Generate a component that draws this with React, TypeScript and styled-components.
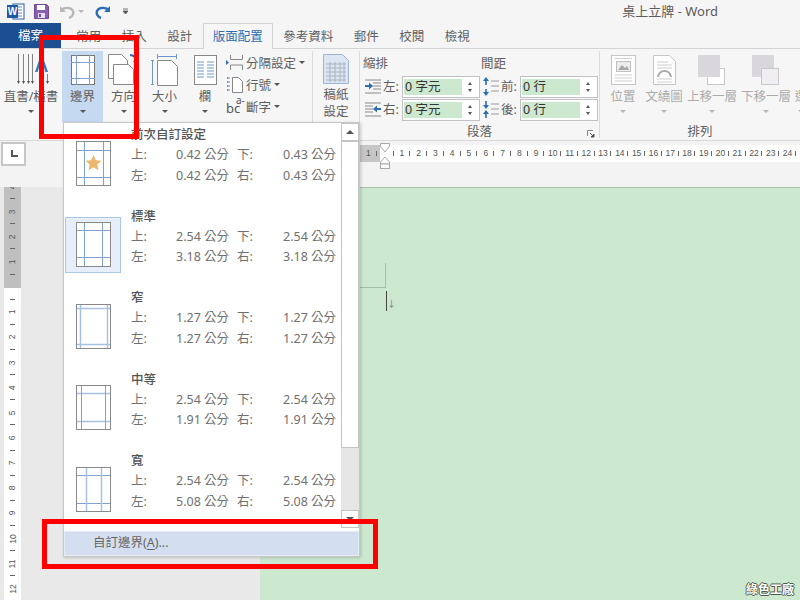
import React from "react";
import styled, { createGlobalStyle } from "styled-components";

const GlobalStyle = createGlobalStyle`
  html, body {
    margin: 0;
    padding: 0;
    background: #f5f5f5;
  }
  * {
    box-sizing: border-box;
  }
`;

const colors = {
  text: "#5e5e5e",
  dark: "#555555",
  disabled: "#ababab",
  blue: "#2b6cb5",
  line: "#7ea3d0",
  pale: "#a6c1e4",
  green: "#cce8cf",
  red: "#ff0000",
};

const Window = styled.div`
  position: relative;
  width: 800px;
  height: 600px;
  overflow: hidden;
  display: flex;
  flex-direction: column;
  background: #f5f5f5;
  color: ${colors.text};
  font-family: "Noto Sans", "Noto Sans CJK TC", sans-serif;
  font-size: 13px;
`;

const TitleBar = styled.div`
  height: 23px;
  display: flex;
  align-items: center;
  padding-left: 7px;
  flex-shrink: 0;
`;

const QuickIcon = styled.span<{ $gap: number }>`
  display: flex;
  margin-right: ${(p) => p.$gap}px;
`;

const Title = styled.div`
  margin-left: auto;
  padding-right: 82px;
  font-size: 13px;
  color: #5c5c5c;
  line-height: 23px;
`;

const TabBar = styled.div`
  height: 26px;
  display: flex;
  flex-shrink: 0;
  border-bottom: 1px solid #d4d4d4;
`;

const FileTab = styled.div`
  width: 61px;
  margin-right: 5px;
  background: #1b4f92;
  color: #ffffff;
  font-size: 12.5px;
  line-height: 26px;
  text-align: center;
`;

const Tab = styled.div<{ $active?: boolean }>`
  padding: 0 9.25px;
  height: ${(p) => (p.$active ? 26 : 25)}px;
  line-height: 25px;
  font-size: 12.5px;
  color: ${(p) => (p.$active ? colors.blue : colors.text)};
  background: ${(p) => (p.$active ? "#f6f6f6" : "transparent")};
  border: 1px solid ${(p) => (p.$active ? "#d4d4d4" : "transparent")};
  border-bottom: none;
`;

const Ribbon = styled.div`
  height: 92px;
  display: flex;
  flex-shrink: 0;
  background: #f6f6f6;
  border-bottom: 1px solid #d8d8d8;
`;

const Group = styled.div<{ $width: number; $divider?: boolean }>`
  width: ${(p) => p.$width}px;
  height: 87px;
  margin-top: 2px;
  flex-shrink: 0;
  display: flex;
  flex-direction: column;
  border-right: ${(p) => (p.$divider ? "1px solid #dadada" : "none")};
`;

const GroupBody = styled.div`
  height: 71px;
  flex-shrink: 0;
  display: flex;
`;

const GroupLabel = styled.div`
  flex-shrink: 0;
  font-size: 12.5px;
  text-align: center;
  line-height: 18px;
  padding-top: 1px;
  position: relative;
`;

const Launcher = styled.span`
  position: absolute;
  right: 4px;
  top: 8px;
  display: flex;
`;

const BigButton = styled.div<{ $width: number; $active?: boolean; $disabled?: boolean }>`
  width: ${(p) => p.$width}px;
  flex-shrink: 0;
  height: 71px;
  padding-top: 2px;
  display: flex;
  flex-direction: column;
  align-items: center;
  white-space: nowrap;
  color: ${(p) => (p.$disabled ? colors.disabled : colors.text)};
  background: ${(p) => (p.$active ? "#c5d9f1" : "transparent")};
`;

const BigIcon = styled.div`
  height: 33px;
  margin-bottom: 1px;
  display: flex;
  align-items: center;
  justify-content: center;
`;

const BigLabel = styled.div`
  font-size: 12.5px;
  line-height: 20px;
`;

const BigLabelSecond = styled(BigLabel)`
  margin-top: -3px;
`;

const Caret = styled.span<{ $muted?: boolean; $gap?: number }>`
  display: inline-block;
  margin-top: ${(p) => p.$gap ?? 0}px;
  width: 0;
  height: 0;
  border-left: 3px solid transparent;
  border-right: 3px solid transparent;
  border-top: 3px solid ${(p) => (p.$muted ? "#b5b5b5" : "#555555")};
`;

const SmallColumn = styled.div`
  display: flex;
  flex-direction: column;
  padding-left: 1px;
`;

const SmallRow = styled.div`
  height: 22px;
  display: flex;
  align-items: center;
  gap: 3px;
  font-size: 12.5px;
  white-space: nowrap;
`;

const ParaColumn = styled.div<{ $width: number; $pad: number }>`
  width: ${(p) => p.$width}px;
  padding-left: ${(p) => p.$pad}px;
`;

const ParaHeading = styled.div`
  font-size: 12.5px;
  line-height: 20px;
  height: 25px;
  padding-top: 3px;
`;

const SpinRow = styled.div`
  height: 23px;
  display: flex;
  align-items: flex-start;
  font-size: 12.5px;
`;

const SpinLabel = styled.span`
  width: 19px;
  line-height: 21px;
  white-space: nowrap;
`;

const SpinIcon = styled.span`
  width: 20px;
  height: 21px;
  display: flex;
  align-items: center;
  justify-content: center;
`;

const Spinner = styled.div`
  width: 78px;
  height: 22px;
  background: #ffffff;
  border: 1px solid #c2c2c2;
  padding: 2px 1px;
  display: flex;
  align-items: stretch;
`;

const SpinValue = styled.div`
  width: 58px;
  background: ${colors.green};
  color: #333333;
  font-size: 12.5px;
  line-height: 16px;
  padding-left: 1px;
`;

const SpinArrows = styled.div`
  flex: 1;
  display: flex;
  flex-direction: column;
  align-items: center;
  justify-content: center;
  gap: 4px;
`;

const ArrowTiny = styled.span<{ $up?: boolean }>`
  width: 0;
  height: 0;
  border-left: 2.5px solid transparent;
  border-right: 2.5px solid transparent;
  border-${(p) => (p.$up ? "bottom" : "top")}: 3px solid #555555;
`;

const RulerRow = styled.div`
  height: 46px;
  flex-shrink: 0;
  display: flex;
  background: #f3f3f3;
  padding-top: 4px;
`;

const CornerBox = styled.div`
  width: 25px;
  height: 24px;
  margin: -3px 0 0 1px;
  background: #ffffff;
  border: 2px solid #c6c6c6;
  display: flex;
  align-items: center;
  justify-content: center;
`;

const HRuler = styled.div`
  position: relative;
  margin-left: 334px;
  height: 17px;
  display: flex;
  background: linear-gradient(90deg, #c6c6c6 20px, #ffffff 20px);
  flex-grow: 1;
`;

const HCell = styled.span`
  flex: 0 0 16.78px;
  position: relative;
  text-align: center;
  font-family: "Liberation Sans", sans-serif;
  font-size: 8.5px;
  line-height: 17px;
  color: #555555;

  &::after {
    content: "";
    position: absolute;
    right: 0;
    top: 6px;
    width: 1px;
    height: 5px;
    background: #666666;
  }
`;

const IndentMarker = styled.span`
  position: absolute;
  left: 20px;
  top: -2px;
  display: flex;
`;

const Workspace = styled.div`
  flex: 1;
  min-height: 0;
  display: flex;
  background: #e9e9e9;
`;

const VRuler = styled.div`
  width: 17px;
  margin-left: 4px;
  flex-shrink: 0;
  overflow: hidden;
  background: linear-gradient(180deg, #bfbfbf 101px, #ffffff 101px);
`;

const VCells = styled.div`
  margin-top: -13px;
  display: flex;
  flex-direction: column;
`;

const VCell = styled.span`
  flex: 0 0 25.15px;
  position: relative;
  display: flex;
  align-items: center;
  justify-content: center;
  font-family: "Liberation Sans", sans-serif;
  font-size: 8.5px;
  color: #555555;

  > b {
    font-weight: 400;
    transform: rotate(-90deg);
  }

  &::after {
    content: "";
    position: absolute;
    bottom: 0;
    left: 6px;
    width: 5px;
    height: 1px;
    background: #666666;
  }
`;

const Page = styled.div`
  margin-left: 239px;
  flex: 1;
  background: ${colors.green};
  border-top: 1px solid #a9bfac;
  padding-top: 75px;
`;

const MarginCorner = styled.div`
  width: 126px;
  height: 25px;
  border-right: 1px solid #a3bfa7;
  border-bottom: 1px solid #a3bfa7;
`;

const Cursor = styled.div`
  margin: 3px 0 0 126px;
  width: 2px;
  height: 20px;
  border-left: 1px solid #444444;
  position: relative;

  &::after {
    content: "↓";
    position: absolute;
    left: 0;
    top: 8px;
    font-size: 9px;
    line-height: 10px;
    color: #777777;
  }
`;

const Menu = styled.div`
  position: absolute;
  left: 63px;
  top: 122px;
  width: 297px;
  height: 435px;
  background: #ffffff;
  border: 1px solid #c8c8c8;
  box-shadow: 1px 1px 3px rgba(0, 0, 0, 0.18);
  z-index: 2;
`;

const MenuBody = styled.div`
  height: 405px;
  display: flex;
`;

const MenuList = styled.div`
  width: 277px;
  padding-top: 1px;
  overflow: hidden;
`;

const MarginItem = styled.div`
  height: 81.5px;
  display: flex;
  gap: 10px;
  padding-left: 1px;
`;

const ThumbCell = styled.div<{ $selected?: boolean }>`
  width: 56px;
  height: 56px;
  margin-top: 11px;
  flex-shrink: 0;
  display: flex;
  align-items: center;
  justify-content: center;
  background: ${(p) => (p.$selected ? "#e6eefa" : "transparent")};
  border: 1px solid ${(p) => (p.$selected ? "#aac8ea" : "transparent")};
`;

const MarginInfo = styled.div`
  flex: 1;
  padding-top: 1px;
`;

const MarginTitle = styled.div`
  font-size: 12.5px;
  font-weight: 500;
  line-height: 20px;
  color: ${colors.dark};
`;

const ValueRow = styled.div`
  display: grid;
  grid-template-columns: 45px 61px 46px 54px;
  font-size: 12.5px;
  line-height: 20.5px;
  color: #707070;
  white-space: nowrap;
`;

const Scrollbar = styled.div`
  width: 18px;
  display: flex;
  flex-direction: column;
  background: #e6e6e6;
`;

const ScrollButton = styled.div<{ $grow?: boolean }>`
  height: ${(p) => (p.$grow ? 307 : 18)}px;
  background: #ffffff;
  border: 1px solid #c4c4c4;
  display: flex;
  align-items: center;
  justify-content: center;
`;

const ScrollTrack = styled.div`
  flex: 1;
`;

const ScrollArrow = styled.span<{ $up?: boolean }>`
  width: 0;
  height: 0;
  border-left: 4px solid transparent;
  border-right: 4px solid transparent;
  border-${(p) => (p.$up ? "bottom" : "top")}: 4px solid #555555;
`;

const MenuFooter = styled.div`
  height: 25px;
  margin: 3px 0 0 0;
  padding-left: 28px;
  background: #d3dff0;
  border: 1px solid #e4ebf5;
  font-size: 12.5px;
  line-height: 22px;
  color: #666666;

  u {
    text-underline-offset: 2px;
  }
`;

const Highlight = styled.div<{ $x: number; $y: number; $w: number; $h: number }>`
  position: absolute;
  left: ${(p) => p.$x}px;
  top: ${(p) => p.$y}px;
  width: ${(p) => p.$w}px;
  height: ${(p) => p.$h}px;
  border: 5px solid ${colors.red};
  z-index: 3;
`;

const Watermark = styled.div`
  position: absolute;
  right: 6px;
  bottom: 3px;
  font-size: 12px;
  line-height: 14px;
  font-weight: 700;
  color: #ffffff;
  text-shadow: 1px 0 #4d5a50, -1px 0 #4d5a50, 0 1px #4d5a50, 0 -1px #4d5a50;
`;

const HyphenGlyph = styled.span`
  position: relative;
  width: 17px;
  height: 20px;
  padding-top: 7px;
  font-size: 13px;
  line-height: 10px;
  color: #555555;
`;

const HyphenA = styled.span`
  position: absolute;
  left: 10px;
  top: 1px;
  font-size: 10px;
  line-height: 6px;
`;

const WordIcon = () => (
  <svg width="18" height="17" viewBox="0 0 18 17">
    <rect x="6" y="1" width="11" height="15" fill="#ffffff" stroke="#2a5ea8" />
    <path d="M10 4h5M10 7h5M10 10h5M10 13h5" stroke="#5f8ac6" />
    <rect x="0" y="2" width="11" height="13" fill="#1f5aa6" />
    <text x="5.5" y="12" fontSize="10" fontWeight="700" textAnchor="middle" fill="#ffffff" fontFamily="Liberation Sans">
      W
    </text>
  </svg>
);

const SaveIcon = () => (
  <svg width="15" height="15" viewBox="0 0 15 15">
    <path d="M.5.5h12l2 2v12H.5z" fill="#8a5fb0" stroke="#6f4797" />
    <rect x="3" y="1" width="8" height="5" fill="#ffffff" />
    <rect x="4" y="9" width="7" height="5" fill="#e6dcef" />
    <rect x="5" y="10" width="2" height="3" fill="#6f4797" />
  </svg>
);

const UndoIcon = () => (
  <svg width="16" height="14" viewBox="0 0 16 14" fill="none">
    <path d="M2 5c4-3 10-3 12 1 1 3-1 6-4 7" stroke="#b8b8b8" strokeWidth="2.4" />
    <path d="M1 1v6h6z" fill="#b8b8b8" />
  </svg>
);

const RedoIcon = () => (
  <svg width="16" height="14" viewBox="0 0 16 14" fill="none">
    <path d="M14 5C10 2 4 2 2 6c-1 3 1 6 4 7" stroke="#2b6cb5" strokeWidth="2.4" />
    <path d="M15 1v6H9z" fill="#2b6cb5" />
  </svg>
);

const MoreIcon = () => (
  <svg width="7" height="7" viewBox="0 0 7 7">
    <path d="M1 1h5M1 3h5L3.5 6z" fill="#555555" stroke="#555555" strokeWidth=".8" />
  </svg>
);

const DirectionIcon = () => (
  <svg width="36" height="32" viewBox="0 0 36 32" fill="none">
    <path d="M5.5 0v28M10.5 0v28M15.5 0v28M19.5 0v28M34.5 20v8" stroke="#808080" />
    <path d="M4 27l1.5 3 1.5-3zM9 27l1.5 3 1.5-3zM14 27l1.5 3 1.5-3zM18 27l1.5 3 1.5-3zM33 27l1.5 3 1.5-3z" fill="#555555" />
    <path d="M22 18L27.5 2h2L35 18h-2.6l-1.4-4.500h-5L24.600 18zM26.800 11.500h3.400L28.500 6z" fill="#3a76bd" />
  </svg>
);

const MarginsIcon = () => (
  <svg width="24" height="30" viewBox="0 0 24 30" fill="none">
    <rect x=".5" y=".5" width="23" height="29" fill="#ffffff" stroke="#777777" />
    <path d="M5.500 0v30M18.500 0v30M0 7.500h24M0 23.500h24" stroke={colors.line} />
  </svg>
);

const OrientationIcon = () => (
  <svg width="32" height="32" viewBox="0 0 32 32" fill="none">
    <path d="M.5.5h13l6 6v18H.5z" fill="#ffffff" stroke="#888888" />
    <path d="M5.500 10.500h15l5 5v15h-20z" fill="#ffffff" stroke="#888888" />
    <path d="M22 1c4 0 6 3 6 7" stroke="#2b6cb5" strokeWidth="2" />
    <path d="M25 7l3 4 3-4z" fill="#2b6cb5" />
  </svg>
);

const SizeIcon = () => (
  <svg width="27" height="32" viewBox="0 0 27 32" fill="none">
    <path d="M6.500 6.500h14l6 6v19h-20z" fill="#ffffff" stroke="#888888" />
    <path d="M6 2.500h20M6.500 0v5M25.500 0v5" stroke="#6d97c9" />
    <path d="M1.500 6v25M0 6.500h3M0 30.500h3" stroke="#6d97c9" />
  </svg>
);

const ColumnsIcon = () => (
  <svg width="23" height="30" viewBox="0 0 23 30" fill="none">
    <rect x=".5" y=".5" width="22" height="29" fill="#ffffff" stroke="#888888" />
    <path d="M3 7h7M13 7h7M3 10h7M13 10h7M3 13h7M13 13h7M3 16h7M13 16h7M3 19h7M13 19h7M3 22h7M13 22h7" stroke="#6d97c9" />
  </svg>
);

const BreaksIcon = () => (
  <svg width="17" height="17" viewBox="0 0 17 17" fill="none">
    <path d="M4.500 1v4.500h12V1M4.500 16v-5h12v5" stroke="#888888" />
    <path d="M0 6l3 2.500L0 11z" fill="#2b6cb5" />
  </svg>
);

const LineNumberIcon = () => (
  <svg width="17" height="17" viewBox="0 0 17 17" fill="none">
    <path d="M6.500 1.500h6l4 4v11h-10z" fill="#ffffff" stroke="#888888" />
    <path d="M1 2h3M1 6h3M1 10h3M1 14h3" stroke="#2b6cb5" strokeWidth="1.6" strokeDasharray="1.5 1" />
  </svg>
);

const ManuscriptIcon = () => (
  <svg width="26" height="30" viewBox="0 0 26 30" fill="none">
    <path d="M.5.5h19l6 6v23H.5z" fill="#dce6f3" stroke="#9db4d2" />
    <path d="M3 10h20M3 14h20M3 18h20M3 22h20M3 26h20M7 8v20M12 8v20M17 8v20M21 8v20" stroke="#aab3bf" />
  </svg>
);

const IndentLeftIcon = () => (
  <svg width="16" height="15" viewBox="0 0 16 15" fill="none">
    <path d="M0 1h16M8 4h8M8 7h8M8 10h8M0 14h16" stroke="#8a8a8a" />
    <path d="M0 7h5" stroke="#2b6cb5" strokeWidth="2" />
    <path d="M4 3.500L8 7l-4 3.500z" fill="#2b6cb5" />
  </svg>
);

const IndentRightIcon = () => (
  <svg width="16" height="15" viewBox="0 0 16 15" fill="none">
    <path d="M0 1h16M0 4h8M0 7h8M0 10h8M0 14h16" stroke="#8a8a8a" />
    <path d="M11 7h5" stroke="#2b6cb5" strokeWidth="2" />
    <path d="M12 3.500L8 7l4 3.500z" fill="#2b6cb5" />
  </svg>
);

const SpaceBeforeIcon = () => (
  <svg width="17" height="19" viewBox="0 0 17 19" fill="none">
    <path d="M3 3v5M3 12v5" stroke="#2b6cb5" strokeWidth="1.6" />
    <path d="M0 4l3-4 3 4zM0 15l3 4 3-4z" fill="#2b6cb5" />
    <path d="M8 4h8M8 9h8M8 14h8" stroke="#9a9a9a" />
  </svg>
);

const SpaceAfterIcon = () => (
  <svg width="17" height="19" viewBox="0 0 17 19" fill="none">
    <path d="M3 1v5M3 13v5" stroke="#2b6cb5" strokeWidth="1.6" />
    <path d="M0 5l3 4 3-4zM0 14l3-4 3 4z" fill="#2b6cb5" />
    <path d="M8 4h8M8 9h8M8 14h8" stroke="#9a9a9a" />
  </svg>
);

const LauncherIcon = () => (
  <svg width="8" height="8" viewBox="0 0 8 8" fill="none">
    <path d="M.5 6V.5H6" stroke="#888888" />
    <path d="M3 3l3 3M7 4v3H4z" stroke="#555555" fill="#555555" />
  </svg>
);

const PositionIcon = () => (
  <svg width="25" height="30" viewBox="0 0 25 30" fill="none">
    <rect x=".5" y=".5" width="24" height="29" fill="#ffffff" stroke="#c4c4c4" />
    <rect x="5.500" y="6.500" width="14" height="10" fill="#ededed" stroke="#c0c0c0" />
    <path d="M7 15l4-5 3 3 2-2 2 4z" fill="#a8a8a8" />
    <path d="M4 20h17M4 23h17M4 26h17M4 3.500h17" stroke="#cfcfcf" />
  </svg>
);

const WrapIcon = () => (
  <svg width="23" height="30" viewBox="0 0 23 30" fill="none">
    <path d="M.5.5h16l6 6v23H.5z" fill="#ffffff" stroke="#c4c4c4" />
    <path d="M4 7h11M4 10h15M4 13h15M4 24h15M4 27h15" stroke="#cfcfcf" />
    <path d="M5 22c1-8 12-8 13 0" stroke="#a8a8a8" strokeWidth="2" />
  </svg>
);

const LayerIcon = ({ front }: { front: boolean }) => (
  <svg width="28" height="30" viewBox="0 0 28 30" fill="none">
    <rect x="9.500" y="13.500" width="17" height="16" fill={front ? "#ffffff" : "#f0eef2"} stroke="#c8c8c8" />
    <rect x="0" y="0" width="22" height="22" fill="#d9d7dc" />
    {!front && <rect x="9.500" y="13.500" width="17" height="16" fill="#f0eef2" stroke="#c8c8c8" />}
  </svg>
);

const HourglassIcon = () => (
  <svg width="10" height="26" viewBox="0 0 10 26" fill="#ffffff" stroke="#a8a8a8">
    <path d="M.5.5h9v3L5 9 .5 3.500z" />
    <path d="M5 14l4.500 5v2h-9v-2z" />
    <rect x=".5" y="21" width="9" height="4.500" />
  </svg>
);

const CornerGlyph = () => (
  <svg width="8" height="8" viewBox="0 0 8 8">
    <path d="M1 0h2v5h5v2H1z" fill="#555555" />
  </svg>
);

interface ThumbProps {
  top: number;
  bottom: number;
  left: number;
  right: number;
  thickH?: boolean;
  thickV?: boolean;
  star?: boolean;
}

const MarginThumb: React.FC<ThumbProps> = ({ top, bottom, left, right, thickH, thickV, star }) => (
  <svg width="35" height="45" viewBox="0 0 35 45" fill="none">
    <rect x=".5" y=".5" width="34" height="44" fill="#ffffff" stroke="#8a8a8a" />
    <path d={`M1 ${top}.5h33M1 ${bottom}.5h33`} stroke={thickH ? colors.pale : colors.line} strokeWidth={thickH ? 1.5 : 1} />
    <path d={`M${left}.5 1v43M${right}.5 1v43`} stroke={thickV ? colors.pale : colors.line} strokeWidth={thickV ? 1.5 : 1} />
    {star && <path d="M17.500 14l2.400 5.200 5.600.6-4.200 3.800 1.200 5.600-5-2.900-5 2.900 1.200-5.600-4.200-3.800 5.600-.6z" fill="#e9b86e" />}
  </svg>
);

const marginItems = [
  { title: "前次自訂設定", t: "0.42", b: "0.43", l: "0.42", r: "0.43", thumb: { top: 9, bottom: 36, left: 8, right: 27, star: true } },
  { title: "標準", t: "2.54", b: "2.54", l: "3.18", r: "3.18", selected: true, thumb: { top: 8, bottom: 35, left: 8, right: 26 } },
  { title: "窄", t: "1.27", b: "1.27", l: "1.27", r: "1.27", thumb: { top: 4, bottom: 40, left: 4, right: 31, thickH: true, thickV: true } },
  { title: "中等", t: "2.54", b: "2.54", l: "1.91", r: "1.91", thumb: { top: 8, bottom: 36, left: 5, right: 29, thickH: true } },
  { title: "寬", t: "2.54", b: "2.54", l: "5.08", r: "5.08", thumb: { top: 8, bottom: 36, left: 10, right: 25, thickV: true } },
];

const tabs = ["常用", "插入", "設計", "版面配置", "參考資料", "郵件", "校閱", "檢視"];
const hRuler = ["1", "", ...Array.from({ length: 24 }, (_, i) => String(i + 1))];
const vRuler = ["4", "3", "2", "1", "", ...Array.from({ length: 12 }, (_, i) => String(i + 1))];

const Big: React.FC<{
  width: number;
  label: string;
  secondLine?: string;
  active?: boolean;
  disabled?: boolean;
  children: React.ReactNode;
}> = ({ width, label, secondLine, active, disabled, children }) => (
  <BigButton $width={width} $active={active} $disabled={disabled}>
    <BigIcon>{children}</BigIcon>
    <BigLabel>{label}</BigLabel>
    {secondLine ? <BigLabelSecond>{secondLine}</BigLabelSecond> : <Caret $muted={disabled} $gap={3} />}
  </BigButton>
);

const Spin: React.FC<{ value: string }> = ({ value }) => (
  <Spinner>
    <SpinValue>{value}</SpinValue>
    <SpinArrows>
      <ArrowTiny $up />
      <ArrowTiny />
    </SpinArrows>
  </Spinner>
);

const App: React.FC = () => (
  <Window>
    <GlobalStyle />
    <TitleBar>
      <QuickIcon $gap={9}>
        <WordIcon />
      </QuickIcon>
      <QuickIcon $gap={10}>
        <SaveIcon />
      </QuickIcon>
      <QuickIcon $gap={3}>
        <UndoIcon />
      </QuickIcon>
      <QuickIcon $gap={11}>
        <Caret $muted />
      </QuickIcon>
      <QuickIcon $gap={11}>
        <RedoIcon />
      </QuickIcon>
      <MoreIcon />
      <Title>桌上立牌 - Word</Title>
    </TitleBar>
    <TabBar>
      <FileTab>檔案</FileTab>
      {tabs.map((tab) => (
        <Tab key={tab} $active={tab === "版面配置"}>
          {tab}
        </Tab>
      ))}
    </TabBar>
    <Ribbon>
      <Group $width={313} $divider>
        <GroupBody>
          <Big width={62} label="直書/橫書">
            <DirectionIcon />
          </Big>
          <Big width={41} label="邊界" active>
            <MarginsIcon />
          </Big>
          <Big width={41} label="方向">
            <OrientationIcon />
          </Big>
          <Big width={41} label="大小">
            <SizeIcon />
          </Big>
          <Big width={40} label="欄">
            <ColumnsIcon />
          </Big>
          <SmallColumn>
            <SmallRow>
              <BreaksIcon />
              分隔設定
              <Caret />
            </SmallRow>
            <SmallRow>
              <LineNumberIcon />
              行號
              <Caret />
            </SmallRow>
            <SmallRow>
              <HyphenGlyph>
                bc
                <HyphenA>a-</HyphenA>
              </HyphenGlyph>
              斷字
              <Caret />
            </SmallRow>
          </SmallColumn>
        </GroupBody>
      </Group>
      <Group $width={47} $divider>
        <GroupBody>
          <Big width={46} label="稿紙" secondLine="設定">
            <ManuscriptIcon />
          </Big>
        </GroupBody>
      </Group>
      <Group $width={240} $divider>
        <GroupBody>
          <ParaColumn $width={120} $pad={3}>
            <ParaHeading>縮排</ParaHeading>
            <SpinRow>
              <SpinIcon>
                <IndentLeftIcon />
              </SpinIcon>
              <SpinLabel>左:</SpinLabel>
              <Spin value="0 字元" />
            </SpinRow>
            <SpinRow>
              <SpinIcon>
                <IndentRightIcon />
              </SpinIcon>
              <SpinLabel>右:</SpinLabel>
              <Spin value="0 字元" />
            </SpinRow>
          </ParaColumn>
          <ParaColumn $width={118} $pad={1}>
            <ParaHeading>間距</ParaHeading>
            <SpinRow>
              <SpinIcon>
                <SpaceBeforeIcon />
              </SpinIcon>
              <SpinLabel>前:</SpinLabel>
              <Spin value="0 行" />
            </SpinRow>
            <SpinRow>
              <SpinIcon>
                <SpaceAfterIcon />
              </SpinIcon>
              <SpinLabel>後:</SpinLabel>
              <Spin value="0 行" />
            </SpinRow>
          </ParaColumn>
        </GroupBody>
        <GroupLabel>
          段落
          <Launcher>
            <LauncherIcon />
          </Launcher>
        </GroupLabel>
      </Group>
      <Group $width={200}>
        <GroupBody>
          <Big width={46} label="位置" disabled>
            <PositionIcon />
          </Big>
          <Big width={36} label="文繞圖" disabled>
            <WrapIcon />
          </Big>
          <Big width={60} label="上移一層" disabled>
            <LayerIcon front />
          </Big>
          <Big width={48} label="下移一層" disabled>
            <LayerIcon front={false} />
          </Big>
          <Big width={22} label="選" disabled>
            {null}
          </Big>
        </GroupBody>
        <GroupLabel>排列</GroupLabel>
      </Group>
    </Ribbon>
    <RulerRow>
      <CornerBox>
        <CornerGlyph />
      </CornerBox>
      <HRuler>
        {hRuler.map((n, i) => (
          <HCell key={i}>{n}</HCell>
        ))}
        <IndentMarker>
          <HourglassIcon />
        </IndentMarker>
      </HRuler>
    </RulerRow>
    <Workspace>
      <VRuler>
        <VCells>
          {vRuler.map((n, i) => (
            <VCell key={i}>
              <b>{n}</b>
            </VCell>
          ))}
        </VCells>
      </VRuler>
      <Page>
        <MarginCorner />
        <Cursor />
      </Page>
    </Workspace>
    <Menu>
      <MenuBody>
        <MenuList>
          {marginItems.map((item) => (
            <MarginItem key={item.title}>
              <ThumbCell $selected={item.selected}>
                <MarginThumb {...item.thumb} />
              </ThumbCell>
              <MarginInfo>
                <MarginTitle>{item.title}</MarginTitle>
                <ValueRow>
                  <span>上:</span>
                  <span>{item.t} 公分</span>
                  <span>下:</span>
                  <span>{item.b} 公分</span>
                </ValueRow>
                <ValueRow>
                  <span>左:</span>
                  <span>{item.l} 公分</span>
                  <span>右:</span>
                  <span>{item.r} 公分</span>
                </ValueRow>
              </MarginInfo>
            </MarginItem>
          ))}
        </MenuList>
        <Scrollbar>
          <ScrollButton>
            <ScrollArrow $up />
          </ScrollButton>
          <ScrollButton $grow />
          <ScrollTrack />
          <ScrollButton>
            <ScrollArrow />
          </ScrollButton>
        </Scrollbar>
      </MenuBody>
      <MenuFooter>
        自訂邊界(<u>A</u>)...
      </MenuFooter>
    </Menu>
    <Highlight $x={39} $y={35} $w={100} $h={104} />
    <Highlight $x={42} $y={519} $w={336} $h={50} />
    <Watermark>綠色工廠</Watermark>
  </Window>
);

export default App;
